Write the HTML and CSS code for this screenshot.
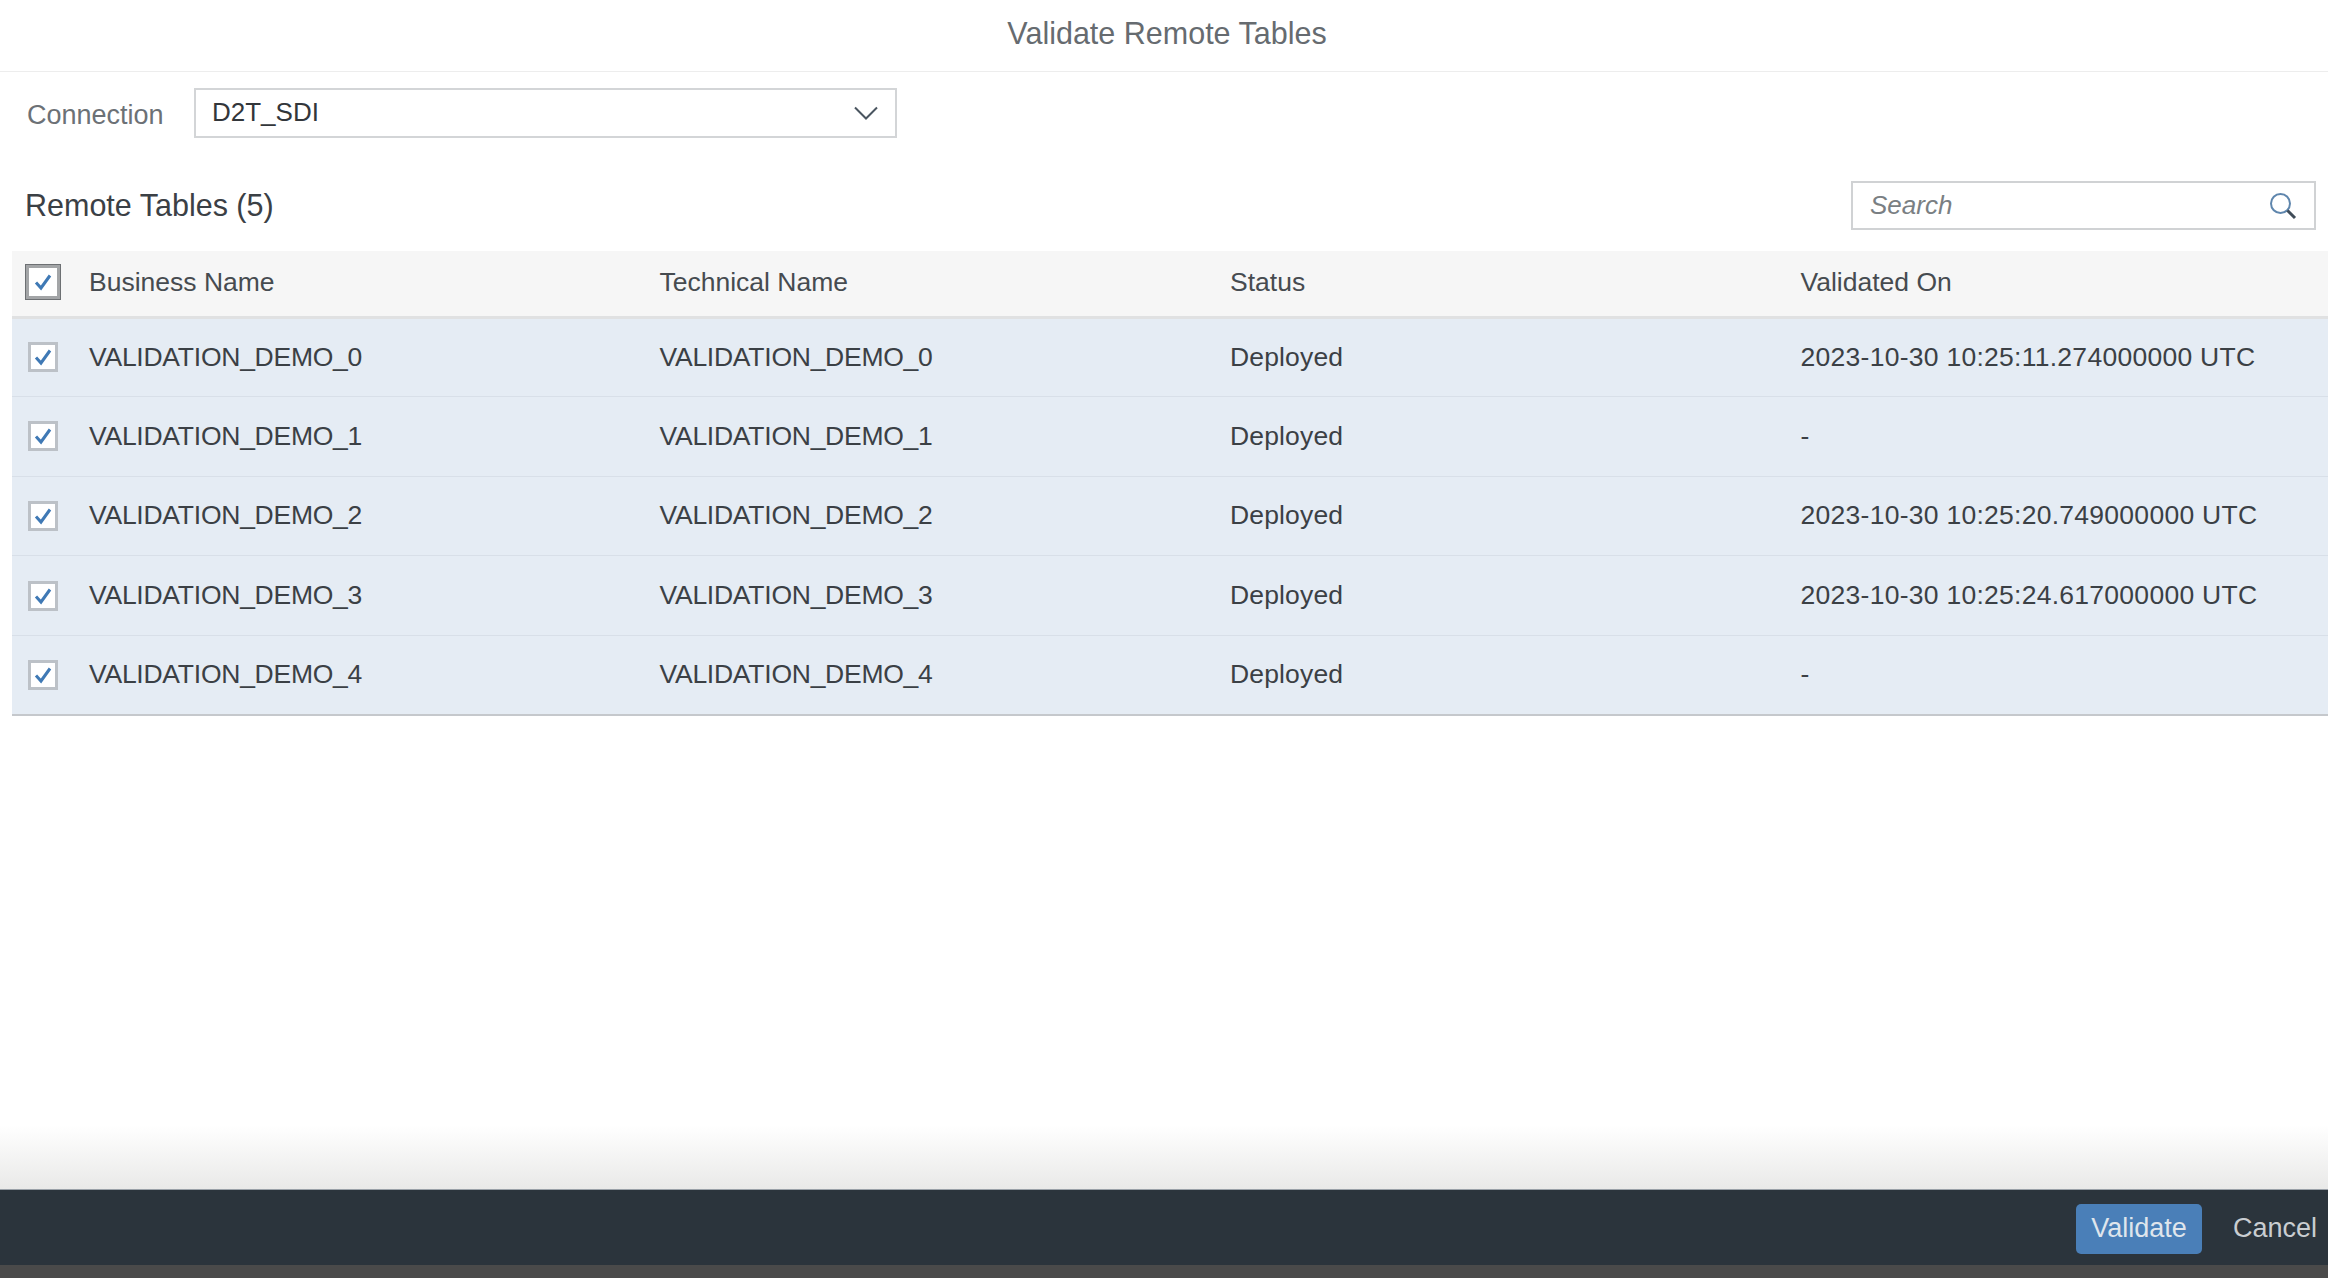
FILE: index.html
```html
<!DOCTYPE html>
<html lang="en">
<head>
    <meta charset="UTF-8">
    <meta name="viewport" content="width=device-width, initial-scale=1.0">
    <title>Validate Remote Tables</title>
    <link rel="stylesheet" href="styles.css">
</head>
<body>
    <header class="dialog-header">Validate Remote Tables</header>

    <main class="dialog-content">
        <div class="connection-row">
            <label class="connection-label">Connection</label>
            <div class="select-box">
                <span class="select-value">D2T_SDI</span>
                <svg class="select-arrow" viewBox="0 0 24 14"><path d="M1 1.5 L12 12.5 L23 1.5"/></svg>
            </div>
        </div>

        <div class="toolbar">
            <h2 class="toolbar-title">Remote Tables (5)</h2>
            <div class="search-box">
                <span class="search-text">Search</span>
                <svg class="search-icon" viewBox="0 0 28 28"><circle cx="11.5" cy="11.5" r="9.5"/><path class="search-handle" d="M18.5 18.5 L26 26"/></svg>
            </div>
        </div>

        <table class="tables-list">
            <thead>
                <tr>
                    <th class="col-check"><span class="check check-all"><svg viewBox="0 0 20 20"><path d="M3 10.5 L8 16 L17 3.5"/></svg></span></th>
                    <th class="col-name">Business Name</th>
                    <th class="col-name">Technical Name</th>
                    <th class="col-name">Status</th>
                    <th>Validated On</th>
                </tr>
            </thead>
            <tbody>
                <tr>
                    <td><span class="check"><svg viewBox="0 0 20 20"><path d="M3 10.5 L8 16 L17 3.5"/></svg></span></td>
                    <td class="name-cell">VALIDATION_DEMO_0</td>
                    <td class="name-cell">VALIDATION_DEMO_0</td>
                    <td class="status-cell">Deployed</td>
                    <td class="date-cell">2023-10-30 10:25:11.274000000 UTC</td>
                </tr>
                <tr>
                    <td><span class="check"><svg viewBox="0 0 20 20"><path d="M3 10.5 L8 16 L17 3.5"/></svg></span></td>
                    <td class="name-cell">VALIDATION_DEMO_1</td>
                    <td class="name-cell">VALIDATION_DEMO_1</td>
                    <td class="status-cell">Deployed</td>
                    <td class="date-cell">-</td>
                </tr>
                <tr>
                    <td><span class="check"><svg viewBox="0 0 20 20"><path d="M3 10.5 L8 16 L17 3.5"/></svg></span></td>
                    <td class="name-cell">VALIDATION_DEMO_2</td>
                    <td class="name-cell">VALIDATION_DEMO_2</td>
                    <td class="status-cell">Deployed</td>
                    <td class="date-cell">2023-10-30 10:25:20.749000000 UTC</td>
                </tr>
                <tr>
                    <td><span class="check"><svg viewBox="0 0 20 20"><path d="M3 10.5 L8 16 L17 3.5"/></svg></span></td>
                    <td class="name-cell">VALIDATION_DEMO_3</td>
                    <td class="name-cell">VALIDATION_DEMO_3</td>
                    <td class="status-cell">Deployed</td>
                    <td class="date-cell">2023-10-30 10:25:24.617000000 UTC</td>
                </tr>
                <tr>
                    <td><span class="check"><svg viewBox="0 0 20 20"><path d="M3 10.5 L8 16 L17 3.5"/></svg></span></td>
                    <td class="name-cell">VALIDATION_DEMO_4</td>
                    <td class="name-cell">VALIDATION_DEMO_4</td>
                    <td class="status-cell">Deployed</td>
                    <td class="date-cell">-</td>
                </tr>
            </tbody>
        </table>
    </main>

    <footer class="dialog-footer">
        <button type="button" class="btn btn-primary">Validate</button>
        <button type="button" class="btn btn-plain">Cancel</button>
    </footer>
    <div class="bottom-strip"></div>
</body>
</html>
```

FILE: styles.css
```css
* {
    box-sizing: border-box;
}
body {
    font-family: "Liberation Sans", Arial, sans-serif;
    font-size: 26.5px;
    color: #3b4045;
    background-color: #ffffff;
    display: flex;
    flex-direction: column;
    height: 100vh;
    margin: 0;
    overflow: hidden;
}
.dialog-header {
    height: 72px;
    flex: none;
    display: flex;
    align-items: center;
    justify-content: center;
    padding: 0 0 5px 6px;
    font-size: 30.5px;
    color: #666b70;
    border-bottom: 1px solid #ededed;
}
.dialog-content {
    flex: 1;
    min-height: 0;
    padding: 16px 0 0 12px;
    background: linear-gradient(to bottom, #ffffff 0, #ffffff calc(100% - 64px), #e9e9e8 100%);
}
.connection-row {
    display: flex;
    align-items: center;
    height: 50px;
}
.connection-label {
    width: 182px;
    padding: 4px 0 0 15px;
    font-size: 27px;
    color: #6c7176;
}
.select-box {
    width: 703px;
    height: 50px;
    display: flex;
    align-items: center;
    justify-content: space-between;
    padding: 0 17px 0 16px;
    background-color: #ffffff;
    border: 2px solid #d3d5d7;
    color: #32363a;
    font-size: 26px;
}
.select-value {
    padding-bottom: 2px;
}
.select-arrow {
    width: 24px;
    height: 14px;
    fill: none;
    stroke: #4a5560;
    stroke-width: 2;
}
.toolbar {
    display: flex;
    align-items: center;
    justify-content: space-between;
    height: 49px;
    margin-top: 43px;
    padding: 0 12px 0 13px;
}
.toolbar-title {
    margin: 0;
    font-size: 30.5px;
    font-weight: normal;
    color: #3b4045;
}
.search-box {
    width: 465px;
    height: 49px;
    display: flex;
    align-items: center;
    justify-content: space-between;
    padding: 0 17px;
    border: 2px solid #d0d2d4;
}
.search-text {
    font-size: 26px;
    font-style: italic;
    color: #7a7f83;
}
.search-icon {
    width: 28px;
    height: 28px;
    fill: none;
    stroke: #5f86ad;
    stroke-width: 2;
}
.search-handle {
    stroke: #3f4c58;
    stroke-width: 3;
}
.tables-list {
    width: 100%;
    margin-top: 21px;
    border-collapse: collapse;
    table-layout: fixed;
}
.tables-list th {
    height: 66px;
    padding: 0 0 2px;
    text-align: left;
    font-weight: normal;
    color: #464b50;
    background-color: #f6f6f6;
    border-bottom: 3px solid #e0e1e2;
}
.tables-list td {
    height: 79.6px;
    padding: 0;
    background-color: #e5ecf4;
    border-bottom: 1px solid #d8dfe8;
}
.tables-list tbody tr:last-child td {
    border-bottom: 2px solid #c5c8cc;
}
.name-cell {
    letter-spacing: -0.25px;
}
.status-cell {
    letter-spacing: 0.15px;
}
.date-cell {
    letter-spacing: 0.27px;
}
.col-check {
    width: 77px;
}
.col-name {
    width: 570.5px;
}
.check {
    display: flex;
    width: 30px;
    height: 30px;
    margin-left: 16px;
    padding: 2px;
    background-color: #ffffff;
    border: 3px solid #bcc1c7;
}
.check svg {
    width: 100%;
    height: 100%;
    fill: none;
    stroke: #3f79b5;
    stroke-width: 3;
}
.check-all {
    width: 36px;
    height: 36px;
    margin-left: 13px;
    padding: 4px;
    border: 4px solid #a3a5a7;
    outline: 1px solid #6d7073;
    outline-offset: -1px;
}
.dialog-footer {
    height: 76px;
    flex: none;
    display: flex;
    align-items: center;
    justify-content: flex-end;
    gap: 31px;
    padding: 2px 11px 0 0;
    background-color: #2b343c;
    border-top: 1px solid #9aa1a8;
}
.btn {
    height: 50px;
    padding: 0;
    font-family: inherit;
    font-size: 27px;
    border: none;
    border-radius: 5px;
}
.btn-primary {
    width: 126px;
    color: #dfe5ec;
    background-color: #4a7fb8;
}
.btn-plain {
    color: #c9cdd1;
    background: none;
}
.bottom-strip {
    height: 13px;
    flex: none;
    background-color: #4a4a4a;
}
```
